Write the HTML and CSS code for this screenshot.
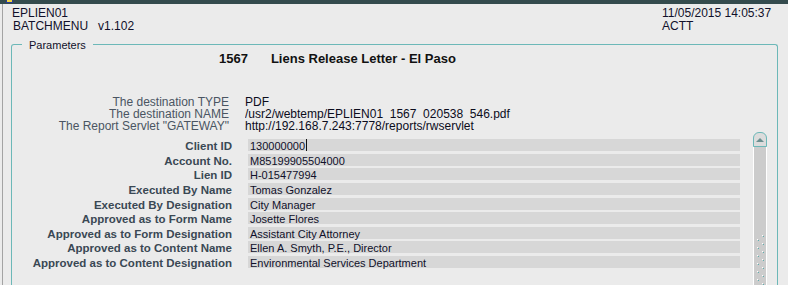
FILE: index.html
```html
<!DOCTYPE html>
<html>
<head>
<meta charset="utf-8">
<link rel="stylesheet" href="styles.css">
</head>
<body>
<div class="topbar"><span class="appicon"></span></div>
<div class="app">
  <header class="header">
    <div class="hleft">
      <div>EPLIEN01</div>
      <div class="sub">BATCHMENU&nbsp;&nbsp;&nbsp;v1.102</div>
    </div>
    <div class="hright">
      <div>11/05/2015 14:05:37</div>
      <div>ACTT</div>
    </div>
  </header>

  <section class="group">
    <span class="legend">Parameters</span>
    <div class="title"><span class="code">1567</span><span class="name">Liens Release Letter - El Paso</span></div>

    <div class="info">
      <div class="ilabel">The destination TYPE</div><div class="ivalue">PDF</div>
      <div class="ilabel">The destination NAME</div><div class="ivalue">/usr2/webtemp/EPLIEN01_1567_020538_546.pdf</div>
      <div class="ilabel">The Report Servlet "GATEWAY"</div><div class="ivalue">http://192.168.7.243:7778/reports/rwservlet</div>
    </div>

    <div class="formarea">
      <div class="form">
        <div class="flabel">Client ID</div><div class="field">130000000<span class="caret"></span></div>
        <div class="flabel">Account No.</div><div class="field">M85199905504000</div>
        <div class="flabel">Lien ID</div><div class="field">H-015477994</div>
        <div class="flabel">Executed By Name</div><div class="field">Tomas Gonzalez</div>
        <div class="flabel">Executed By Designation</div><div class="field">City Manager</div>
        <div class="flabel">Approved as to Form Name</div><div class="field">Josette Flores</div>
        <div class="flabel">Approved as to Form Designation</div><div class="field">Assistant City Attorney</div>
        <div class="flabel">Approved as to Content Name</div><div class="field">Ellen A. Smyth, P.E., Director</div>
        <div class="flabel">Approved as to Content Designation</div><div class="field">Environmental Services Department</div>
      </div>
      <div class="scrollbar">
        <div class="sbup"><svg width="12" height="6" viewBox="0 0 12 6"><polygon points="2,5 6,1 10,5" fill="#6b8f90"/></svg></div>
        <div class="sbtrack">
          <svg class="grip" width="12" height="50" viewBox="0 0 12 50">
            <g>
              <rect x="8" y="0" width="1" height="1" fill="#ffffff"/><rect x="9" y="1" width="1" height="1" fill="#5fb0b0"/>
              <rect x="3" y="4" width="1" height="1" fill="#ffffff"/><rect x="4" y="5" width="1" height="1" fill="#5fb0b0"/>
              <rect x="8" y="8" width="1" height="1" fill="#ffffff"/><rect x="9" y="9" width="1" height="1" fill="#5fb0b0"/>
              <rect x="3" y="12" width="1" height="1" fill="#ffffff"/><rect x="4" y="13" width="1" height="1" fill="#5fb0b0"/>
              <rect x="8" y="16" width="1" height="1" fill="#ffffff"/><rect x="9" y="17" width="1" height="1" fill="#5fb0b0"/>
              <rect x="3" y="20" width="1" height="1" fill="#ffffff"/><rect x="4" y="21" width="1" height="1" fill="#5fb0b0"/>
              <rect x="8" y="24" width="1" height="1" fill="#ffffff"/><rect x="9" y="25" width="1" height="1" fill="#5fb0b0"/>
              <rect x="3" y="28" width="1" height="1" fill="#ffffff"/><rect x="4" y="29" width="1" height="1" fill="#5fb0b0"/>
              <rect x="8" y="32" width="1" height="1" fill="#ffffff"/><rect x="9" y="33" width="1" height="1" fill="#5fb0b0"/>
              <rect x="3" y="36" width="1" height="1" fill="#ffffff"/><rect x="4" y="37" width="1" height="1" fill="#5fb0b0"/>
              <rect x="8" y="40" width="1" height="1" fill="#ffffff"/><rect x="9" y="41" width="1" height="1" fill="#5fb0b0"/>
              <rect x="3" y="44" width="1" height="1" fill="#ffffff"/><rect x="4" y="45" width="1" height="1" fill="#5fb0b0"/>
              <rect x="8" y="48" width="1" height="1" fill="#ffffff"/><rect x="9" y="49" width="1" height="1" fill="#5fb0b0"/>
            </g>
          </svg>
        </div>
      </div>
    </div>
  </section>
</div>
</body>
</html>
```

FILE: styles.css
```css
* { box-sizing: border-box; }
html, body {
  margin: 0;
  padding: 0;
  width: 788px;
  height: 285px;
  overflow: hidden;
  background: #ebebeb;
  font-family: "Liberation Sans", Arial, sans-serif;
  color: #111122;
}
.topbar {
  height: 4px;
  background: #344b4d;
  position: relative;
}
.appicon {
  position: absolute;
  left: 6px;
  top: 0;
  width: 7px;
  height: 3px;
  background: #f2d640;
  border: 1px solid #2a3b9a;
  border-top: none;
}
.app {
  margin-left: 2px;
  border-left: 1px solid #a3a3a3;
  height: 281px;
  overflow: hidden;
}
.header {
  display: flex;
  justify-content: space-between;
  padding: 3px 12px 0 9px;
  font-size: 12px;
  line-height: 13px;
  color: #10102a;
}
.hleft .sub { padding-left: 1px; }
.hright { width: 114px; }

.group {
  position: relative;
  margin: 11px 0 0 8px;
  width: 767px;
  height: 242px;
  border: 1px solid #6cb8b8;
  border-bottom: none;
  border-radius: 3px 3px 0 0;
}
.legend {
  position: absolute;
  top: -6px;
  left: 10px;
  padding: 0 7px;
  background: #ebebeb;
  font-size: 11px;
  line-height: 12px;
  color: #10102a;
}
.title {
  padding: 6px 0 0 207px;
  font-size: 13px;
  font-weight: bold;
  line-height: 16px;
  color: #111111;
  display: flex;
  gap: 23px;
}
.info {
  margin-top: 29px;
  display: grid;
  grid-template-columns: 217px 1fr;
  column-gap: 16px;
  font-size: 12px;
  line-height: 12px;
}
.ilabel {
  text-align: right;
  color: #4a5562;
  height: 12px;
  white-space: nowrap;
}
.ivalue {
  color: #0c0c1c;
  height: 12px;
  overflow: hidden;
  white-space: nowrap;
}
.formarea {
  display: flex;
  align-items: flex-start;
}
.form {
  margin-top: 7px;
  display: grid;
  grid-template-columns: 220px 492px;
  grid-auto-rows: 12px;
  column-gap: 16px;
  row-gap: 2.625px;
  font-size: 11px;
}
.flabel {
  text-align: right;
  font-weight: bold;
  font-size: 11.5px;
  color: #3a4854;
  line-height: 14px;
  white-space: nowrap;
}
.field {
  background: #d7d7d7;
  color: #10102a;
  line-height: 14px;
  padding-left: 2px;
  white-space: nowrap;
}
.caret {
  display: inline-block;
  width: 1px;
  height: 12px;
  background: #111111;
  vertical-align: top;
  margin-left: 1px;
}
.scrollbar {
  margin-left: 13px;
  width: 14px;
  height: 153px;
  display: flex;
  flex-direction: column;
}
.sbup {
  height: 15px;
  border: 1px solid #6cb8b8;
  border-radius: 6px 6px 0 0;
  background: #dcdcdc;
  display: flex;
  justify-content: center;
  align-items: flex-start;
  padding-top: 4px;
}
.sbtrack {
  flex: 1;
  background: #cccccc;
  border-left: 1px solid #ffffff;
  border-right: 1px solid #ffffff;
  padding-top: 88px;
  overflow: hidden;
}
.grip { display: block; }
```
